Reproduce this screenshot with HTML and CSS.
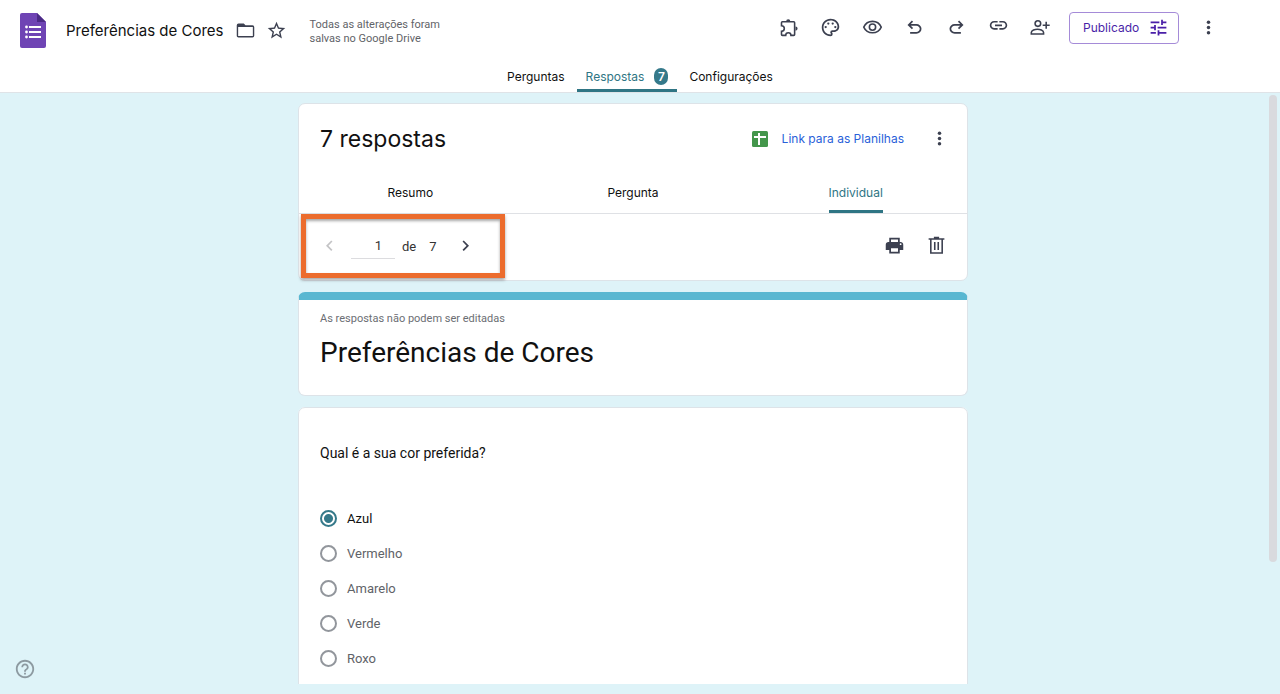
FILE: index.html
```
<!DOCTYPE html>
<html lang="pt-BR">
<head>
<meta charset="UTF-8">
<meta name="viewport" content="width=device-width, initial-scale=1.0">
<title>Preferências de Cores</title>
<link rel="stylesheet" href="styles.css">
</head>
<body>
<header class="header">
  <div class="topbar">
    <svg class="logo" viewBox="0 0 26 35" aria-hidden="true">
      <path fill="#6f44b4" d="M2 0h15l9 9v24a2 2 0 0 1-2 2H2a2 2 0 0 1-2-2V2a2 2 0 0 1 2-2z"/>
      <path fill="#4b2a85" d="M17 0l9 9h-9z"/>
      <path fill="#fff" d="M9 13h12v2H9zM9 18h12v2H9zM9 23h12v2H9z"/>
      <circle cx="6.500" cy="14" r="1.400" fill="#fff"/>
      <circle cx="6.500" cy="19" r="1.400" fill="#fff"/>
      <circle cx="6.500" cy="24" r="1.400" fill="#fff"/>
    </svg>
    <h1 class="doc-title">Preferências de Cores</h1>
    <button class="icon-btn small" type="button" aria-label="Mover para pasta">
      <svg class="icon" viewBox="0 0 24 24"><path d="M20 6h-8l-2-2H4a2 2 0 0 0-2 2v12c0 1.100.9 2 2 2h16a2 2 0 0 0 2-2V8a2 2 0 0 0-2-2zm.4 12.400H3.600V8h16.800v10.400z"/></svg>
    </button>
    <button class="icon-btn small" type="button" aria-label="Marcar com estrela">
      <svg class="icon" viewBox="0 0 24 24"><path d="M22 9.240l-7.190-.62L12 2 9.190 8.630 2 9.240l5.460 4.730L5.820 21 12 17.270 18.180 21l-1.630-7.030L22 9.240zM12 15.400l-3.760 2.270 1-4.280-3.320-2.880 4.380-.38L12 6.100l1.710 4.040 4.380.38-3.320 2.880 1 4.280L12 15.400z"/></svg>
    </button>
    <p class="save-status">Todas as alterações foram salvas no Google Drive</p>

    <div class="actions">
      <button class="icon-btn" type="button" aria-label="Complementos">
        <svg class="icon line" viewBox="0 0 24 24"><path d="M5 5.500h13a1 1 0 0 1 1 1V20a1 1 0 0 1-1 1h-3.200c0-1.600-1.300-3-3-3s-3 1.400-3 3H5a1 1 0 0 1-1-1v-3.600c1.700 0 3.200-1.400 3.200-3.200S5.700 10 4 10V6.500a1 1 0 0 1 1-1z"/><path class="solid" d="M9.300 5a2.400 2.400 0 0 1 4.800 0zM20 10.800a2.400 2.400 0 0 1 0 4.800z"/></svg>
      </button>
      <button class="icon-btn" type="button" aria-label="Personalizar tema">
        <svg class="icon" viewBox="0 0 24 24"><path d="M12 22C6.490 22 2 17.510 2 12S6.490 2 12 2s10 4.040 10 9c0 3.310-2.690 6-6 6h-1.770c-.28 0-.5.22-.5.5 0 .12.05.23.13.33.41.47.64 1.060.64 1.670A2.500 2.500 0 0 1 12 22zm0-18c-4.410 0-8 3.590-8 8s3.590 8 8 8c.28 0 .5-.22.5-.5a.54.54 0 0 0-.14-.35c-.41-.46-.63-1.050-.63-1.650a2.500 2.500 0 0 1 2.500-2.500H16c2.210 0 4-1.790 4-4 0-3.860-3.590-7-8-7z"/><circle cx="6.500" cy="11.500" r="1.300"/><circle cx="9.500" cy="7.500" r="1.300"/><circle cx="14.500" cy="7.500" r="1.300"/><circle cx="17.500" cy="11.500" r="1.300"/></svg>
      </button>
      <button class="icon-btn" type="button" aria-label="Visualizar">
        <svg class="icon line" viewBox="0 0 24 24"><path d="M12 5c4.400 0 8.200 2.500 10 6.500-1.800 4-5.600 6.500-10 6.500s-8.200-2.500-10-6.500C3.800 7.500 7.600 5 12 5z"/><circle cx="12" cy="11.500" r="3.600"/></svg>
      </button>
      <button class="icon-btn" type="button" aria-label="Desfazer">
        <svg class="icon" viewBox="0 -960 960 960"><path d="M280-200v-80h284q63 0 109.500-40T720-420q0-60-46.500-100T564-560H312l104 104-56 56-200-200 200-200 56 56-104 104h252q97 0 166.500 63T800-420q0 94-69.500 157T564-200H280Z"/></svg>
      </button>
      <button class="icon-btn" type="button" aria-label="Refazer">
        <svg class="icon" viewBox="0 -960 960 960"><path d="M396-200q-97 0-166.500-63T160-420q0-94 69.500-157T396-640h252L544-744l56-56 200 200-200 200-56-56 104-104H396q-63 0-109.500 40T240-420q0 60 46.500 100T396-280h284v80H396Z"/></svg>
      </button>
      <button class="icon-btn" type="button" aria-label="Copiar link">
        <svg class="icon" viewBox="0 0 24 24"><path d="M3.900 9.500c0-1.710 1.390-3.100 3.100-3.100h4V4.500H7c-2.760 0-5 2.240-5 5s2.240 5 5 5h4v-1.900H7c-1.710 0-3.100-1.390-3.100-3.100zM8 10.500h8v-2H8v2zm9-6h-4v1.900h4c1.710 0 3.100 1.390 3.100 3.100s-1.390 3.100-3.100 3.100h-4v1.900h4c2.760 0 5-2.240 5-5s-2.240-5-5-5z"/></svg>
      </button>
      <button class="icon-btn" type="button" aria-label="Adicionar colaboradores">
        <svg class="icon line" viewBox="0 0 24 24"><circle cx="9" cy="7.500" r="3.200"/><path d="M1.500 19.500v-1.700c0-2.600 4.300-3.800 7-3.800s7 1.200 7 3.800v1.700zM18.500 5.500v8M14.500 9.500h8"/></svg>
      </button>
      <button class="publish-btn" type="button">
        Publicado
        <svg class="icon" viewBox="0 0 24 24"><path d="M3 17v2h6v-2H3zM3 5v2h10V5H3zm10 16v-2h8v-2h-8v-2h-2v6h2zM7 9v2H3v2h4v2h2V9H7zm14 4v-2H11v2h10zm-6-4h2V7h4V5h-4V3h-2v6z"/></svg>
      </button>
      <button class="icon-btn" type="button" aria-label="Mais">
        <svg class="icon" viewBox="0 0 24 24"><circle cx="12" cy="6" r="2"/><circle cx="12" cy="12" r="2"/><circle cx="12" cy="18" r="2"/></svg>
      </button>
    </div>
  </div>

  <nav class="tabs">
    <a class="tab" href="#perguntas">Perguntas</a>
    <a class="tab active" href="#respostas">Respostas <span class="badge">7</span></a>
    <a class="tab" href="#configuracoes">Configurações</a>
  </nav>
</header>

<main class="content">
  <section class="card summary">
    <div class="summary-head">
      <h2 class="summary-title">7 respostas</h2>
      <a class="sheets-link" href="#planilhas">
        <svg class="sheets-icon" viewBox="0 0 16 16" aria-hidden="true"><rect width="16" height="16" rx="1.500" fill="#43964b"/><path d="M2 6h12M7 2v12" stroke="#fff" stroke-width="2"/></svg>
        Link para as Planilhas
      </a>
      <button class="icon-btn small" type="button" aria-label="Mais opções">
        <svg class="icon" viewBox="0 0 24 24"><circle cx="12" cy="6" r="2"/><circle cx="12" cy="12" r="2"/><circle cx="12" cy="18" r="2"/></svg>
      </button>
    </div>
    <nav class="views">
      <a class="view" href="#resumo">Resumo</a>
      <a class="view" href="#pergunta">Pergunta</a>
      <a class="view active" href="#individual">Individual</a>
    </nav>
    <div class="response-bar">
      <div class="pager">
        <button class="icon-btn small" type="button" aria-label="Resposta anterior" disabled>
          <svg class="icon" viewBox="0 0 24 24"><path d="M15.400 6.400L14 5l-6 6 6 6 1.400-1.400L10.800 11z"/></svg>
        </button>
        <input class="page-input" type="text" value="1" aria-label="Número da resposta">
        <span>de</span>
        <span>7</span>
        <button class="icon-btn small" type="button" aria-label="Próxima resposta">
          <svg class="icon" viewBox="0 0 24 24"><path d="M8.600 15.600L10 17l6-6-6-6-1.400 1.400 4.600 4.600z"/></svg>
        </button>
      </div>
      <div class="response-actions">
        <button class="icon-btn" type="button" aria-label="Imprimir">
          <svg class="icon" viewBox="0 0 24 24"><path fill-rule="evenodd" d="M19 8h-1V3H6v5H5c-1.660 0-3 1.340-3 3v6h4v4h12v-4h4v-6c0-1.660-1.340-3-3-3zM8 5h8v3H8V5zm8 14H8v-4h8v4zm2-8.500a1 1 0 1 0 2 0 1 1 0 0 0-2 0z"/></svg>
        </button>
        <button class="icon-btn" type="button" aria-label="Excluir">
          <svg class="icon line" viewBox="0 0 24 24"><path d="M5.500 5v15.500h13V5M3 4.500h18M9 3h6M10 8v9M14 8v9"/></svg>
        </button>
      </div>
    </div>
  </section>

  <section class="card form-head">
    <p class="note">As respostas não podem ser editadas</p>
    <h2 class="form-title">Preferências de Cores</h2>
  </section>

  <fieldset class="card question">
    <legend class="question-title">Qual é a sua cor preferida?</legend>
    <label class="option checked"><input type="radio" name="cor" checked> Azul</label>
    <label class="option"><input type="radio" name="cor"> Vermelho</label>
    <label class="option"><input type="radio" name="cor"> Amarelo</label>
    <label class="option"><input type="radio" name="cor"> Verde</label>
    <label class="option"><input type="radio" name="cor"> Roxo</label>
  </fieldset>

  <div class="scroll-thumb" aria-hidden="true"></div>
</main>

<button class="help-btn" type="button" aria-label="Ajuda">
  <svg viewBox="0 0 24 24"><path d="M11 18h2v-2h-2v2zm1-16C6.480 2 2 6.480 2 12s4.480 10 10 10 10-4.480 10-10S17.520 2 12 2zm0 18c-4.410 0-8-3.590-8-8s3.590-8 8-8 8 3.590 8 8-3.590 8-8 8zm0-14c-2.210 0-4 1.790-4 4h2c0-1.100.9-2 2-2s2 .9 2 2c0 2-3 1.750-3 5h2c0-2.250 3-2.500 3-5 0-2.210-1.790-4-4-4z"/></svg>
</button>
</body>
</html>
```
FILE: styles.css
```
* {
  box-sizing: border-box;
}

body {
  display: flex;
  flex-direction: column;
  height: 100vh;
  margin: 0;
  padding-bottom: 10px;
  overflow: hidden;
  background: #def3f8;
  color: #111;
  font-family: Roboto, sans-serif;
  font-size: 13px;
}

h1,
h2,
p {
  margin: 0;
  font-weight: 400;
}

a {
  color: inherit;
  text-decoration: none;
}

button {
  font-family: inherit;
  cursor: pointer;
}

/* Header */
.header {
  flex: none;
  background: #fff;
  border-bottom: 1px solid #dfe3e7;
}

.topbar {
  display: flex;
  align-items: center;
  height: 60px;
  padding: 0 51px 0 20px;
}

.logo {
  flex: none;
  width: 26px;
  height: 35px;
  margin-right: 20px;
}

.doc-title {
  margin-right: 6px;
  font-family: Inter, sans-serif;
  font-size: 15px;
  white-space: nowrap;
}

.icon {
  display: block;
  width: 21px;
  height: 21px;
  fill: currentColor;
}

.icon.line {
  fill: none;
  stroke: currentColor;
  stroke-width: 1.800;
}

.icon .solid {
  fill: currentColor;
  stroke: none;
}

.icon-btn {
  display: flex;
  flex: none;
  align-items: center;
  justify-content: center;
  width: 42px;
  height: 32px;
  padding: 0;
  border: 0;
  background: none;
  color: #3c4050;
}

.icon-btn.small {
  width: 31px;
}

.icon-btn:disabled {
  color: #c4c4c6;
}

.save-status {
  width: 144px;
  margin-left: 18px;
  padding-top: 3px;
  color: #5f6368;
  font-size: 11px;
  line-height: 14px;
}

.actions {
  display: flex;
  align-items: center;
  margin-left: auto;
  padding-bottom: 5px;
}

.publish-btn {
  display: flex;
  align-items: center;
  justify-content: space-between;
  width: 110px;
  height: 32px;
  margin: 0 8px;
  padding: 0 9px 0 13px;
  border: 1px solid #a58bd8;
  border-radius: 4px;
  background: #fff;
  color: #4a1fa8;
  font-family: Inter, sans-serif;
  font-size: 12px;
}

.tabs {
  display: flex;
  justify-content: center;
  gap: 3px;
}

.tab {
  display: flex;
  align-items: center;
  gap: 10px;
  height: 32px;
  padding: 3px 9px 0;
  border-bottom: 3px solid transparent;
  font-family: Inter, sans-serif;
  font-size: 12px;
}

.tab.active {
  border-color: #2f7584;
  border-radius: 3px 3px 0 0;
  color: #2f7584;
}

.badge {
  width: 14px;
  border-radius: 7px;
  background: #35798a;
  color: #fff;
  font-weight: 600;
  line-height: 17px;
  text-align: center;
}

/* Cards */
.content {
  position: relative;
  flex: 1;
  min-height: 0;
  padding: 10px 14px 0 0;
  overflow: hidden;
}

.card {
  max-width: 670px;
  margin: 0 auto 11px;
  border: 1px solid #dde3e8;
  border-radius: 7px;
  background: #fff;
}

.summary-head {
  display: flex;
  align-items: center;
  height: 69px;
  padding: 0 12px 0 21px;
}

.summary-title {
  font-family: Inter, sans-serif;
  font-size: 23px;
}

.sheets-link {
  display: flex;
  align-items: center;
  gap: 14px;
  margin-left: auto;
  margin-right: 20px;
  color: #2a5fd9;
  font-family: Inter, sans-serif;
  font-size: 12px;
}

.sheets-icon {
  width: 16px;
  height: 16px;
}

.views {
  display: grid;
  grid-template-columns: 1fr 1fr 1fr;
  height: 41px;
  border-bottom: 1px solid #dfe1e5;
}

.view {
  justify-self: center;
  padding-top: 12px;
  border-bottom: 3px solid transparent;
  font-family: Inter, sans-serif;
  font-size: 12px;
}

.view.active {
  border-color: #2f7584;
  border-radius: 3px 3px 0 0;
  color: #2f7584;
}

.response-bar {
  display: flex;
  justify-content: space-between;
  height: 66px;
  padding: 0 10px 0 2px;
}

.pager {
  display: flex;
  align-items: center;
  gap: 13px;
  height: 64px;
  padding: 0 19px 0 8px;
  border: 5px solid #ec6c2d;
  box-shadow: 0 2px 3px rgba(0, 0, 0, 0.35), inset 0 2px 3px rgba(0, 0, 0, 0.35);
  color: #333;
}

.page-input {
  width: 44px;
  height: 26px;
  margin-left: -7px;
  margin-right: -6px;
  padding: 0 13px 0 0;
  border: 0;
  border-bottom: 1px solid #dcdcdf;
  background: none;
  color: inherit;
  font: inherit;
  text-align: right;
}

.response-actions {
  display: flex;
  align-items: center;
  padding-bottom: 4px;
}

.form-head {
  padding: 12px 21px 24px;
  border-top: 8px solid #59b7d1;
}

.note {
  color: #6b6e73;
  font-size: 11px;
  line-height: 14px;
}

.form-title {
  margin-top: 9px;
  font-size: 28px;
  line-height: 36px;
}

.question {
  min-width: 0;
  padding: 35px 21px 40px;
}

.question-title {
  float: left;
  width: 100%;
  margin-bottom: 38px;
  padding: 0;
  font-size: 14px;
  line-height: 20px;
}

.option {
  display: flex;
  clear: both;
  align-items: center;
  gap: 10px;
  height: 35px;
  color: #5f6368;
}

.option.checked {
  color: #111;
}

.option input {
  width: 17px;
  height: 17px;
  margin: 0;
  border: 2px solid #92969c;
  border-radius: 50%;
  background: #fff;
  appearance: none;
}

.option input:checked {
  border-color: #35798a;
  background: radial-gradient(circle, #35798a 4px, #fff 5px);
}

.scroll-thumb {
  position: absolute;
  top: 2px;
  right: 3px;
  width: 8px;
  height: 79%;
  border-radius: 4px;
  background: #d9dade;
}

.help-btn {
  position: fixed;
  bottom: 14px;
  left: 14px;
  padding: 0;
  border: 0;
  background: none;
}

.help-btn svg {
  display: block;
  width: 22px;
  height: 22px;
  fill: #8d9aa1;
}
```
